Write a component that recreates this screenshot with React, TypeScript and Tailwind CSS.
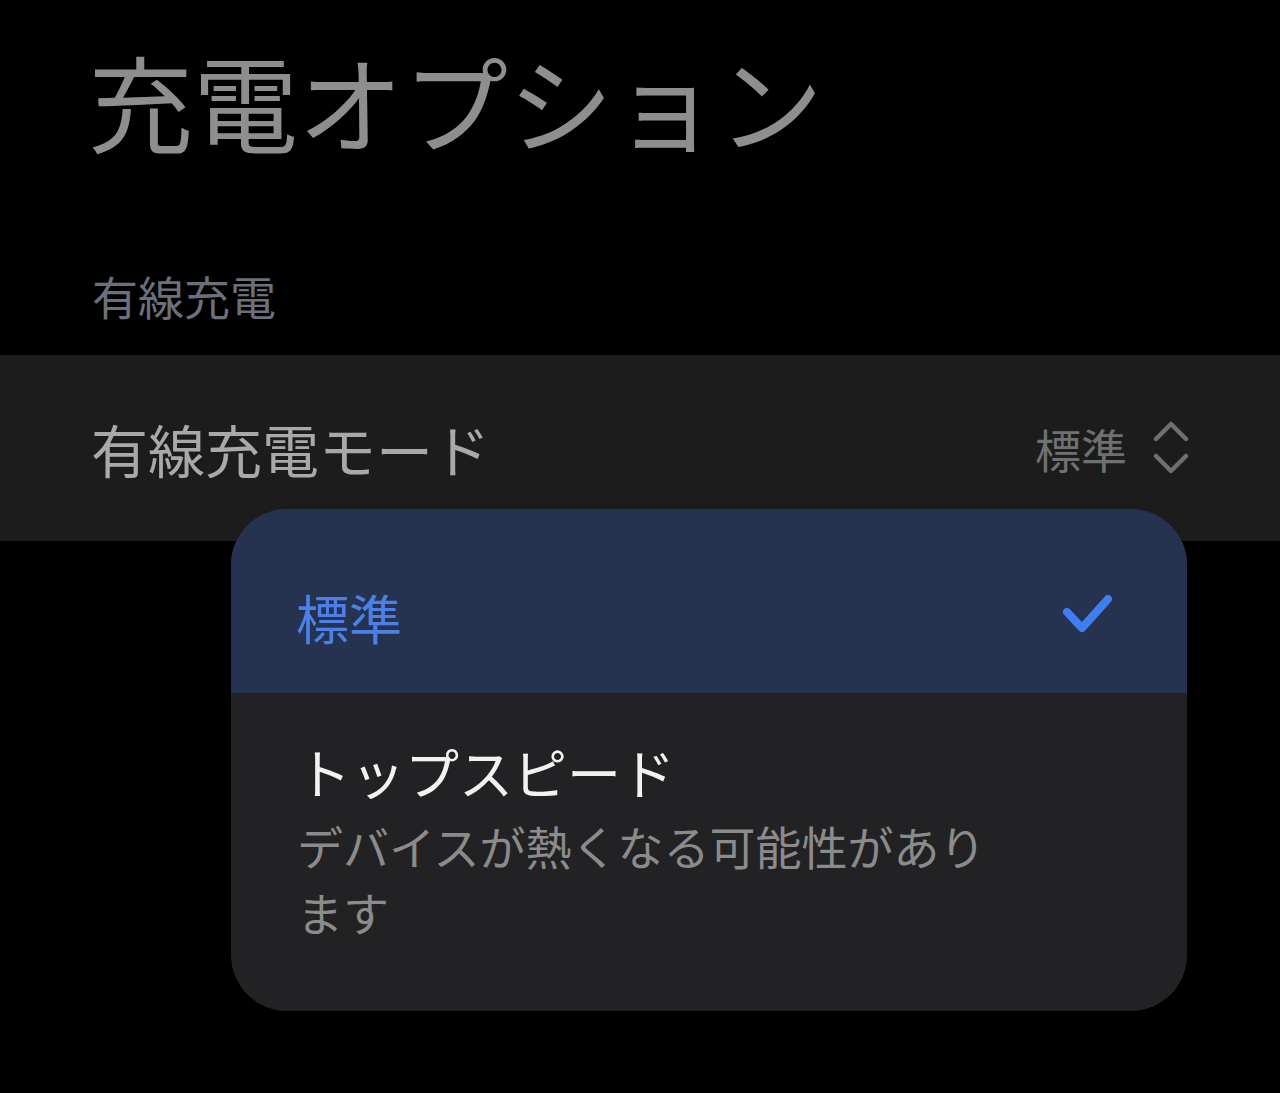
import React from "react";

export default function App() {
  return (
    <div className="relative h-[1093px] w-[1280px] overflow-hidden bg-black font-['Noto_Sans_CJK_JP','Noto_Sans',sans-serif]">
      <div className="pl-[88px] pt-[37px] text-[105px] leading-[124px] text-[#8e8e8e]">
        充電オプション
      </div>
      <div className="mt-[104px] pl-[92px] text-[46px] leading-[60px] text-[#6c707c]">
        有線充電
      </div>
      <div className="mt-[30px] flex h-[186px] items-center justify-between bg-[#1c1c1c] pl-[91px] pr-[91px]">
        <div className="text-[57px] leading-[64px] text-[#a9a9a9]">有線充電モード</div>
        <div className="flex items-center gap-[26px]">
          <span className="text-[46px] leading-[60px] text-[#707070]">標準</span>
          <svg width="36" height="56" viewBox="0 0 36 56" fill="none" stroke="#6f6f6f" strokeWidth="4.5" strokeLinecap="round" strokeLinejoin="round">
            <polyline points="3,19 18,4 33,19" />
            <polyline points="3,36 18,51 33,36" />
          </svg>
        </div>
      </div>

      <div className="absolute left-[231px] top-[509px] h-[502px] w-[956px] overflow-hidden rounded-[56px] bg-[#222224]">
        <div className="flex h-[184px] items-center justify-between bg-[#253350] pl-[65px] pr-[73px] pt-[32px]">
          <span className="text-[53px] leading-[64px] text-[#4d80e6]">標準</span>
          <svg width="52" height="44" viewBox="0 0 52 44" fill="none" stroke="#3f7ef0" strokeWidth="8" strokeLinecap="round" strokeLinejoin="round">
            <polyline points="5,17 20,33 46,4" />
          </svg>
        </div>
        <div className="pl-[66px] pt-[47px]">
          <div className="text-[54px] leading-[64px] text-[#f2f2f2]">トップスピード</div>
          <div className="mt-[8px] max-w-[700px] text-[46px] leading-[66px] text-[#8b8b8b]">
            デバイスが熱くなる可能性があります
          </div>
        </div>
      </div>
    </div>
  );
}
